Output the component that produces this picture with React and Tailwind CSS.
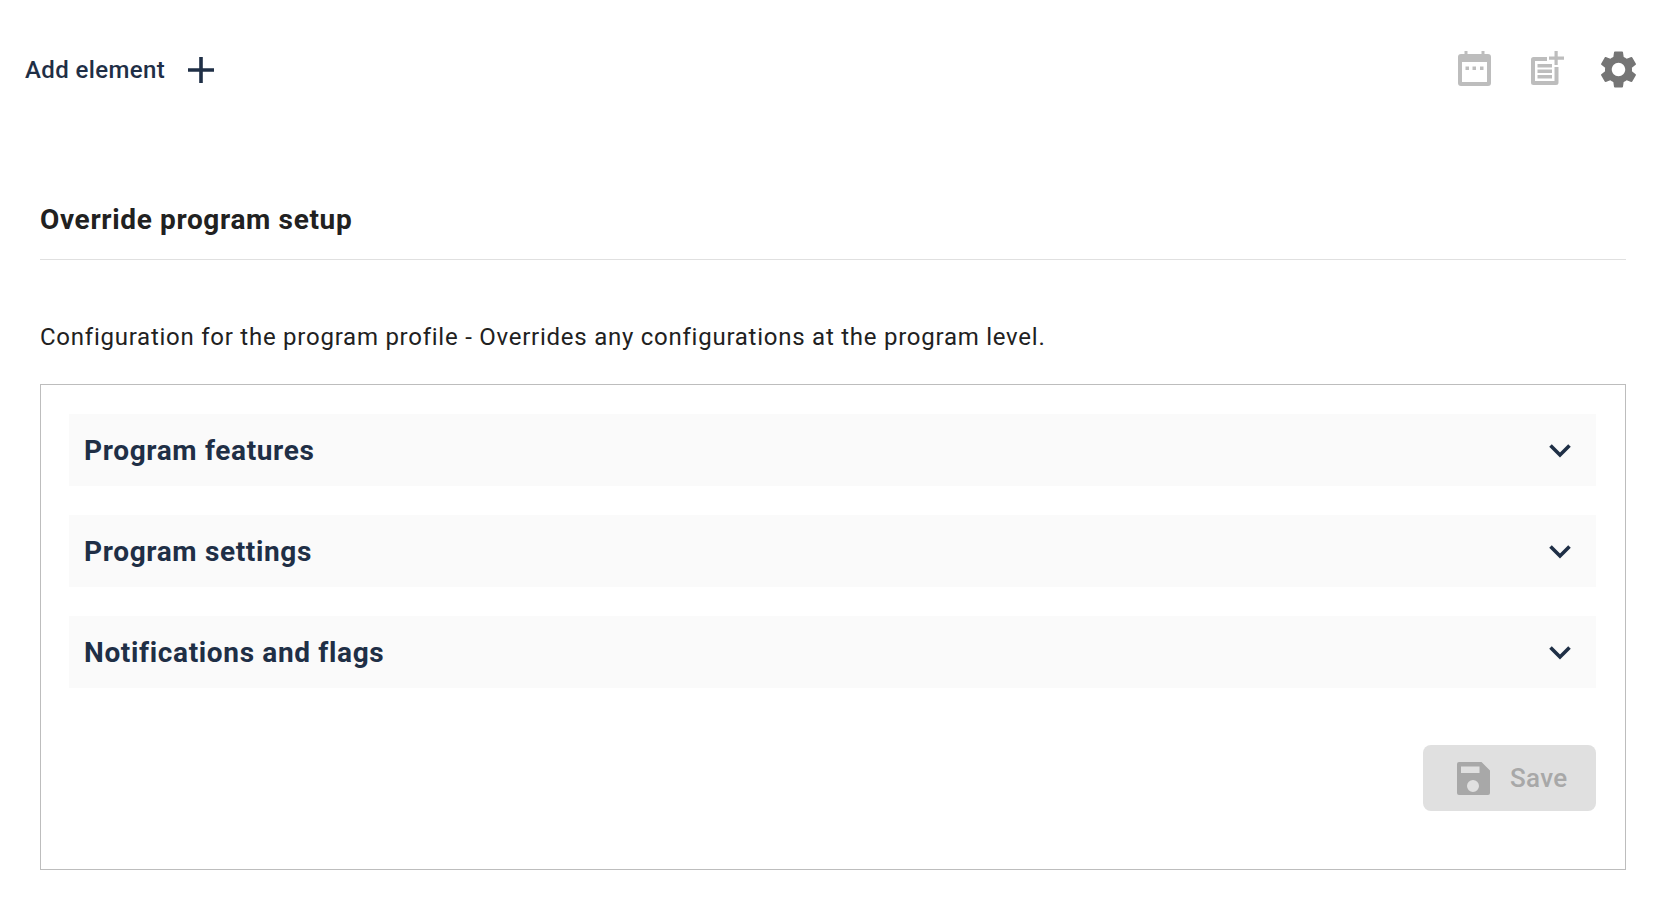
import React from 'react';

const rows = ['Program features', 'Program settings', 'Notifications and flags'];

function App() {
  return (
    <div className="w-[1670px] h-[908px] bg-white font-['Roboto',sans-serif] overflow-hidden">
      {/* Toolbar */}
      <div className="flex items-center justify-between h-[140px] pl-[25px] pr-[29px]">
        <div className="flex items-center text-[#1f2f46]">
          <span className="text-[24px] font-medium tracking-[0.4px]">Add element</span>
          <svg className="ml-[20px]" width="32" height="32" viewBox="0 0 32 32">
            <path d="M16 3v26M3 16h26" stroke="currentColor" strokeWidth="3.6" fill="none" />
          </svg>
        </div>
        <div className="flex items-center mb-[2px]">
          <svg width="40" height="40" viewBox="0 0 40 40" fill="#bdbdbd">
            <path fillRule="evenodd" d="M9.500 2h3v3h14V2h3v3H33a3 3 0 0 1 3 3v26a3 3 0 0 1-3 3H6a3 3 0 0 1-3-3V8a3 3 0 0 1 3-3h3.500V2zM7 13v20h25V13H7z" />
            <rect x="10.500" y="17.500" width="3.500" height="3.500" />
            <rect x="17.500" y="17.500" width="3.500" height="3.500" />
            <rect x="25" y="17.500" width="3.500" height="3.500" />
          </svg>
          <svg className="ml-[33px]" width="40" height="40" viewBox="0 0 40 40" fill="#bdbdbd">
            <path d="M5.500 8H19v4H7v20h19.500V18H30.500v15.500a2.500 2.500 0 0 1-2.500 2.500H5.500A2.500 2.500 0 0 1 3 33.500v-23A2.500 2.500 0 0 1 5.500 8z" />
            <rect x="9.500" y="15" width="14.500" height="3.500" />
            <rect x="9.500" y="20.500" width="14.500" height="3.500" />
            <rect x="9.500" y="26" width="14.500" height="3.500" />
            <path d="M26.500 2h3.200v5.500H36v3.200h-6.300V16h-3.200v-5.300H21V7.500h5.500z" />
          </svg>
          <svg className="ml-[28px]" width="45" height="45" viewBox="0 0 24 24" fill="#757575">
            <path d="M19.140 12.940c.04-.3.060-.61.060-.94 0-.32-.02-.64-.07-.94l2.030-1.580a.49.49 0 0 0 .12-.61l-1.920-3.320a.488.488 0 0 0-.59-.22l-2.390.96c-.5-.38-1.030-.7-1.620-.94l-.36-2.540a.484.484 0 0 0-.48-.41h-3.840c-.24 0-.43.17-.47.41l-.36 2.540c-.59.24-1.130.57-1.620.94l-2.390-.96c-.22-.08-.47 0-.59.22L2.740 8.870c-.12.21-.08.47.12.61l2.030 1.580c-.05.3-.09.63-.09.94s.02.64.07.94l-2.030 1.580a.49.49 0 0 0-.12.61l1.920 3.320c.12.22.37.29.59.22l2.390-.96c.5.38 1.030.7 1.620.94l.36 2.540c.05.24.24.41.48.41h3.840c.24 0 .44-.17.47-.41l.36-2.540c.59-.24 1.130-.56 1.620-.94l2.390.96c.22.08.47 0 .59-.22l1.920-3.320c.12-.22.07-.47-.12-.61l-2.010-1.580zM12 15.600c-1.980 0-3.600-1.620-3.600-3.600s1.620-3.600 3.600-3.600 3.600 1.620 3.600 3.600-1.620 3.600-3.600 3.600z" />
          </svg>
        </div>
      </div>

      <div className="pl-[40px] pr-[44px]">
        <h1 className="text-[28px] leading-[40px] font-bold tracking-[0.65px] text-[#212121] mt-[60px] pb-[19px] border-b border-[#e0e0e0]">
          Override program setup
        </h1>
        <p className="mt-[57px] text-[24px] leading-[40px] text-[#212121] tracking-[0.75px]">
          Configuration for the program profile - Overrides any configurations at the program level.
        </p>

        {/* Accordion panel */}
        <div className="mt-[27px] h-[486px] border border-[#bdbdbd] pt-[29px] pl-[28px] pr-[29px]">
          <div className="flex flex-col gap-[29px]">
            {rows.map((row) => (
              <div key={row} className="flex items-center justify-between h-[72px] bg-[#fafafa] pl-[15px] pr-[20px]">
                <span className="pt-[1px] text-[28px] font-bold tracking-[0.65px] text-[#1f2f46]">{row}</span>
                <svg width="32" height="32" viewBox="0 0 32 32">
                  <path d="M6.500 11.500l9.500 9.500 9.500-9.500" stroke="#1f2f46" strokeWidth="3.600" fill="none" />
                </svg>
              </div>
            ))}
          </div>
          <div className="flex justify-end mt-[57px]">
            <button className="flex items-center w-[173px] h-[66px] bg-[#e0e0e0] rounded-[8px] pl-[34px] text-[#a8a8a8]">
              <svg width="33" height="33" viewBox="0 0 33 33" fill="#a8a8a8">
                <path fillRule="evenodd" d="M2 0h22.500L33 8.500V31a2 2 0 0 1-2 2H2a2 2 0 0 1-2-2V2a2 2 0 0 1 2-2zM4 4.500V11h18.500V4.500H4zM16 30a6 6 0 1 0 0-12 6 6 0 0 0 0 12z" />
              </svg>
              <span className="ml-[20px] text-[26px] font-medium tracking-[0.3px]">Save</span>
            </button>
          </div>
        </div>
      </div>
    </div>
  );
}

export default App;
